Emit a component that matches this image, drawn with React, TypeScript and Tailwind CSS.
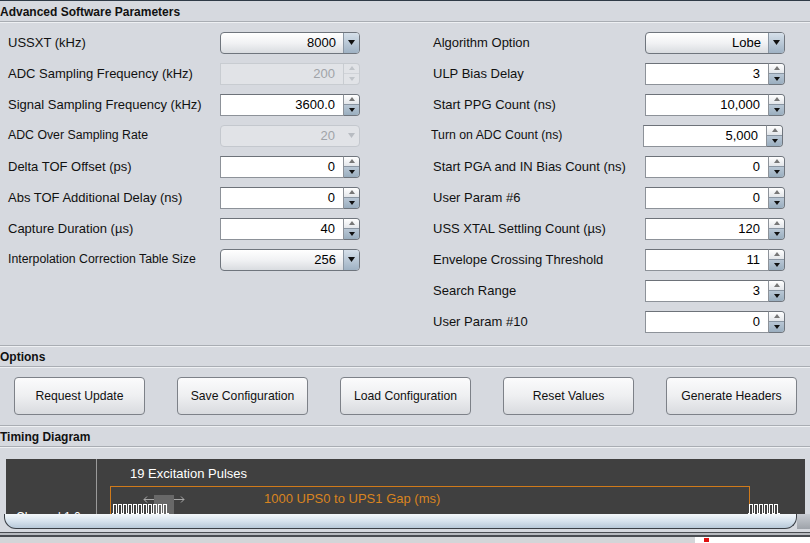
import React from "react";

const font = { fontFamily: '"Liberation Sans", Arial, sans-serif' };

function Combo({ value }: { value: string }) {
  return (
    <div className="flex h-[22px] w-[140px] rounded-[4px] border border-[#6f757d] bg-gradient-to-b from-[#ffffff] via-[#f1f2f4] to-[#d9dce0] overflow-hidden">
      <div className="flex-1 flex items-center justify-end pr-[7px] text-[13px] text-black">{value}</div>
      <div className="w-[16px] border-l border-[#8a96a3] bg-gradient-to-b from-[#d6e0ea] to-[#9fb2c4] flex items-center justify-center">
        <svg width="7" height="5" viewBox="0 0 7 5"><path d="M0 0 L7 0 L3.5 5 Z" fill="#111" /></svg>
      </div>
    </div>
  );
}

function DisabledCombo({ value }: { value: string }) {
  return (
    <div className="flex h-[22px] w-[140px] rounded-[4px] border border-[#c4c8ce] bg-[#e1e3e7] overflow-hidden">
      <div className="flex-1 flex items-center justify-end pr-[8px] text-[13px] text-[#a0a3a8]">{value}</div>
      <div className="w-[16px] flex items-center justify-center">
        <svg width="7" height="5" viewBox="0 0 7 5"><path d="M0 0 L7 0 L3.5 5 Z" fill="#b8bcc2" /></svg>
      </div>
    </div>
  );
}

function Spinner({ value, disabled }: { value: string; disabled?: boolean }) {
  if (disabled) {
    return (
      <div className="flex h-[22px] w-[140px]">
        <div className="flex-1 flex items-center justify-end pr-[8px] text-[13px] text-[#a0a3a8] bg-[#e1e3e7] border border-[#c8ccd1]">{value}</div>
        <div className="w-[16px] flex flex-col border border-l-0 border-[#c8ccd1] rounded-r-[4px] bg-[#e1e3e7]">
          <div className="flex-1 flex items-center justify-center border-b border-[#d0d3d8]">
            <svg width="6" height="4" viewBox="0 0 6 4"><path d="M0 4 L6 4 L3 0 Z" fill="#c0c4c9" /></svg>
          </div>
          <div className="flex-1 flex items-center justify-center">
            <svg width="6" height="4" viewBox="0 0 6 4"><path d="M0 0 L6 0 L3 4 Z" fill="#c0c4c9" /></svg>
          </div>
        </div>
      </div>
    );
  }
  return (
    <div className="flex h-[22px] w-[140px]">
      <div className="flex-1 flex items-center justify-end pr-[8px] text-[13px] text-black bg-white border border-[#8d9299] border-t-[#6d7279]">{value}</div>
      <div className="w-[16px] flex flex-col border border-l-0 border-[#6f757d] rounded-r-[4px] overflow-hidden">
        <div className="flex-1 flex items-center justify-center bg-gradient-to-b from-[#ffffff] to-[#e3e6ea] border-b border-[#8a96a3]">
          <svg width="6" height="4" viewBox="0 0 6 4"><path d="M0 4 L6 4 L3 0 Z" fill="#777" /></svg>
        </div>
        <div className="flex-1 flex items-center justify-center bg-gradient-to-b from-[#b9c7d5] to-[#9aaebf]">
          <svg width="6" height="4" viewBox="0 0 6 4"><path d="M0 0 L6 0 L3 4 Z" fill="#111" /></svg>
        </div>
      </div>
    </div>
  );
}

type RowDef = { label: string; ctrl: React.ReactNode; small?: boolean; shift?: boolean };

function Row({ r }: { r: RowDef }) {
  return (
    <div className={`flex items-center h-[31px] ${r.shift ? "-ml-[2px]" : ""}`}>
      <div className={`w-[212px] ${r.small ? "text-[12.3px]" : "text-[13px]"} text-[#111]`}>{r.label}</div>
      {r.ctrl}
    </div>
  );
}

const left: RowDef[] = [
  { label: "USSXT (kHz)", ctrl: <Combo value="8000" /> },
  { label: "ADC Sampling Frequency (kHz)", ctrl: <Spinner value="200" disabled /> },
  { label: "Signal Sampling Frequency (kHz)", ctrl: <Spinner value="3600.0" /> },
  { label: "ADC Over Sampling Rate", ctrl: <DisabledCombo value="20" />, small: true },
  { label: "Delta TOF Offset (ps)", ctrl: <Spinner value="0" /> },
  { label: "Abs TOF Additional Delay (ns)", ctrl: <Spinner value="0" /> },
  { label: "Capture Duration (µs)", ctrl: <Spinner value="40" /> },
  { label: "Interpolation Correction Table Size", ctrl: <Combo value="256" />, small: true },
];

const right: RowDef[] = [
  { label: "Algorithm Option", ctrl: <Combo value="Lobe" /> },
  { label: "ULP Bias Delay", ctrl: <Spinner value="3" /> },
  { label: "Start PPG Count (ns)", ctrl: <Spinner value="10,000" /> },
  { label: "Turn on ADC Count (ns)", ctrl: <Spinner value="5,000" />, small: true, shift: true },
  { label: "Start PGA and IN Bias Count (ns)", ctrl: <Spinner value="0" /> },
  { label: "User Param #6", ctrl: <Spinner value="0" /> },
  { label: "USS XTAL Settling Count (µs)", ctrl: <Spinner value="120" /> },
  { label: "Envelope Crossing Threshold", ctrl: <Spinner value="11" /> },
  { label: "Search Range", ctrl: <Spinner value="3" /> },
  { label: "User Param #10", ctrl: <Spinner value="0" /> },
];

function SectionHeader({ title }: { title: string }) {
  return (
    <div className="h-[21px] flex items-center pt-[1px] border-b border-[#a9adb3] shadow-[0_1px_0_#eef0f3]">
      <span className="text-[12px] font-bold text-[#111] leading-none">{title}</span>
    </div>
  );
}

function Btn({ label }: { label: string }) {
  return (
    <div className="w-[131px] h-[38px] rounded-[4px] border border-[#7d8188] bg-gradient-to-b from-[#fbfbfc] via-[#eeeff1] to-[#d9dbdf] flex items-center justify-center text-[12.2px] text-[#111]">
      {label}
    </div>
  );
}

function Pulses({ n }: { n: number }) {
  const w = n * 5 + 2;
  let d = "M0 10.5";
  for (let i = 0; i < n; i++) {
    const x = i * 5 + 1.5;
    d += ` L${x} 10.5 L${x} 1.5 L${x + 3} 1.5 L${x + 3} 10.5`;
  }
  d += ` L${w} 10.5`;
  return (
    <svg width={w} height="12" viewBox={`0 0 ${w} 12`} shapeRendering="crispEdges">
      <path d={d} stroke="#ffffff" strokeWidth="1" fill="none" />
    </svg>
  );
}

function Arrow({ dir }: { dir: "l" | "r" }) {
  return (
    <svg width="11" height="7" viewBox="0 0 11 7">
      {dir === "l" ? (
        <path d="M11 3.5 H1 M4 0.5 L1 3.5 L4 6.5" stroke="#a8a8a8" strokeWidth="1" fill="none" />
      ) : (
        <path d="M0 3.5 H10 M7 0.5 L10 3.5 L7 6.5" stroke="#a8a8a8" strokeWidth="1" fill="none" />
      )}
    </svg>
  );
}

export default function App() {
  return (
    <div className="w-[810px] h-[543px] bg-[#d6d9df] overflow-hidden flex flex-col" style={font}>
      <div className="h-[1px] bg-[#2f3a46]" />
      <SectionHeader title="Advanced Software Parameters" />
      <div className="h-[324px] flex pt-[5px] border-b border-[#a9adb3] shadow-[0_1px_0_#eef0f3]">
        <div className="w-[425px] pl-[8px] flex flex-col">
          {left.map((r) => (
            <Row key={r.label} r={r} />
          ))}
        </div>
        <div className="pl-[8px] flex flex-col">
          {right.map((r) => (
            <Row key={r.label} r={r} />
          ))}
        </div>
      </div>
      <SectionHeader title="Options" />
      <div className="h-[59px] flex items-start pt-[10px] pl-[14px] gap-[32px] border-b border-[#a9adb3] shadow-[0_1px_0_#eef0f3]">
        <Btn label="Request Update" />
        <Btn label="Save Configuration" />
        <Btn label="Load Configuration" />
        <Btn label="Reset Values" />
        <Btn label="Generate Headers" />
      </div>
      <SectionHeader title="Timing Diagram" />
      <div className="pt-[12px] pl-[6px] pr-[5px]">
        <div className="h-[55px] bg-[#404040] flex overflow-hidden">
          <div className="w-[91px] border-r border-[#9a9a9a] relative">
            <span className="absolute left-[10px] top-[49px] text-white text-[12px]">Channel 1.0</span>
          </div>
          <div className="flex-1 relative">
            <span className="absolute left-[33px] top-[5px] text-[13px] text-white">19 Excitation Pulses</span>
            <div className="absolute left-[13px] top-[27px] w-[640px] h-[40px] border border-b-0 border-[#d07a1a]" />
            <span className="absolute left-[167px] top-[30px] text-[13px] text-[#d9841f]">1000 UPS0 to UPS1 Gap (ms)</span>
            <div className="absolute left-[57px] top-[36px] w-[20px] h-[20px] bg-[#686868]" />
            <div className="absolute left-[46px] top-[37px]"><Arrow dir="l" /></div>
            <div className="absolute left-[77px] top-[37px]"><Arrow dir="r" /></div>
            <div className="absolute left-[15px] top-[44px]"><Pulses n={11} /></div>
            <div className="absolute left-[651px] top-[44px]"><Pulses n={6} /></div>
          </div>
        </div>
      </div>
      <div className="h-[15px] flex pl-[4px]">
        <div className="w-[793px] h-[15px] rounded-bl-[12px] rounded-br-[12px] border border-t-0 border-[#3a3f46] bg-gradient-to-b from-[#f4f8fb] via-[#d7e3ee] to-[#b8c9d9]" />
        <div className="flex-1 bg-gradient-to-b from-[#c8ccd2] to-[#9ea3aa]" />
      </div>
      <div className="h-[3px] bg-[#d6d9df]" />
      <div className="h-[1px] bg-[#4a4d52]" />
      <div className="h-[2px] bg-[#b8bbc0]" />
      <div className="h-[2px] bg-[#4a4d52]" />
      <div className="flex-1 bg-[#d3d5d8] relative">
        <div className="absolute left-[695px] top-0 w-[115px] h-full bg-white" />
        <div className="absolute left-[704px] top-[1px] w-[5px] h-[4px] bg-[#e01010]" />
      </div>
    </div>
  );
}
